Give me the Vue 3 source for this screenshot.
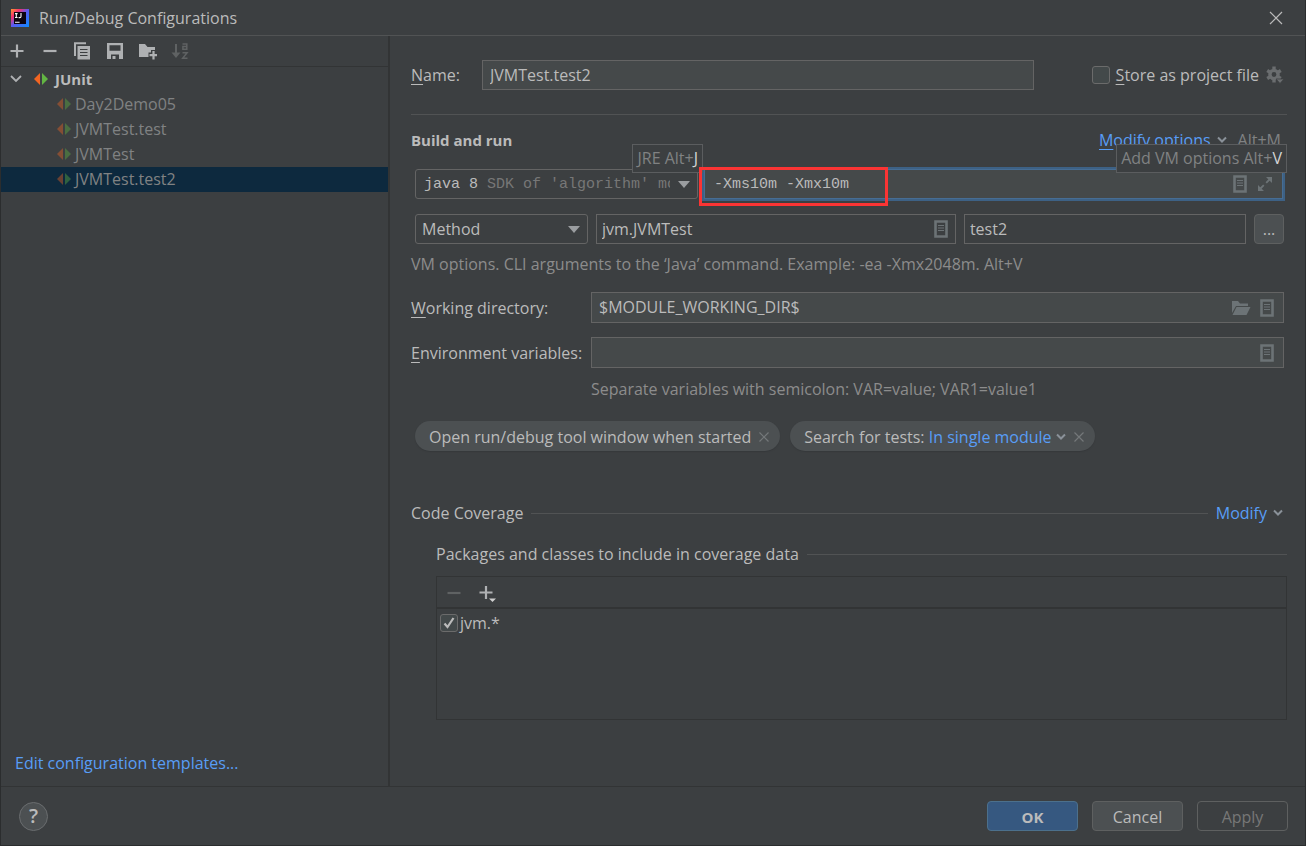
<script setup>
import { ref } from 'vue'

const configs = ['Day2Demo05', 'JVMTest.test', 'JVMTest', 'JVMTest.test2']
const selected = ref('JVMTest.test2')
const name = ref('JVMTest.test2')
const storeAsFile = ref(false)
const vmOptions = ref('-Xms10m -Xmx10m')
const testClass = ref('jvm.JVMTest')
const testMethod = ref('test2')
const workingDir = ref('$MODULE_WORKING_DIR$')
const envVars = ref('')
const jvmIncluded = ref(true)
</script>

<template>
  <svg class="symbols" aria-hidden="true">
    <symbol id="doc" viewBox="0 0 14 18">
      <path d="M1.5 1.5h11v15h-11z" fill="none" stroke="currentColor" stroke-width="2.6" />
      <path d="M4 5.5h6M4 8h6M4 10.5h6" stroke="currentColor" stroke-width="1.2" />
    </symbol>
    <symbol id="chevron" viewBox="0 0 10 8">
      <path d="M1 1.5l4 4 4-4" fill="none" stroke="currentColor" stroke-width="2" />
    </symbol>
    <symbol id="cross" viewBox="0 0 12 12">
      <path d="M1.5 1.5l9 9M10.5 1.5l-9 9" fill="none" stroke="currentColor" stroke-width="1.2" />
    </symbol>
    <symbol id="junit" viewBox="0 0 16 14">
      <path d="M7 1v12L1 7z" fill="#f26522" />
      <path d="M9 1v12l6-6z" fill="#62b543" />
    </symbol>
    <symbol id="arrow" viewBox="0 0 12 7">
      <path d="M0 0h12L6 7z" fill="#9a9da0" />
    </symbol>
  </svg>

  <div class="dialog">
    <header class="titlebar">
      <svg class="logo" viewBox="0 0 18 18" aria-hidden="true">
        <defs>
          <linearGradient id="ij" x1="0" y1="0" x2="1" y2="1">
            <stop offset="0" stop-color="#fe9a2e" />
            <stop offset=".25" stop-color="#f8306d" />
            <stop offset=".5" stop-color="#5a5bf0" />
            <stop offset="1" stop-color="#0a8bff" />
          </linearGradient>
        </defs>
        <path d="M0 0h18v18H0z" fill="url(#ij)" />
        <path d="M3 3h12v12H3z" fill="#0c0410" />
        <path d="M4 4.6h2.600M5.300 4.600v4M4 8.500h2.600M10 4v3.400c0 .8-.5 1.200-1.200 1.200H7.600M4 13.200h4.600" fill="none" stroke="#fff" stroke-width="1.1" />
      </svg>
      <h1>Run/Debug Configurations</h1>
      <button class="plain close" aria-label="Close">
        <svg viewBox="0 0 14 14" width="14" height="14"><path d="M1 1l12 12M13 1L1 13" stroke="#bbb" stroke-width="1.2" /></svg>
      </button>
    </header>

    <div class="body">
      <aside>
        <div class="toolbar">
          <button class="plain" aria-label="Add"><svg viewBox="0 0 18 18"><path d="M9 2.5v13M2.5 9h13" stroke="#afb1b3" stroke-width="2.2" /></svg></button>
          <button class="plain" aria-label="Remove"><svg viewBox="0 0 18 18"><path d="M2.5 9h13" stroke="#afb1b3" stroke-width="2.2" /></svg></button>
          <button class="plain" aria-label="Copy">
            <svg viewBox="1 0 18 18"><path d="M2 14V1.2h11" fill="none" stroke="#afb1b3" stroke-width="2" /><path d="M4.5 4H17v13.5H4.5z" fill="#afb1b3" /><path d="M7 7.5h7.5M7 10.5h7.5M7 13.5h7.5" stroke="#3c3f41" stroke-width="1.2" /></svg>
          </button>
          <button class="plain" aria-label="Save">
            <svg viewBox="1 0 18 18"><path d="M1 1h16v16H1z" fill="#afb1b3" /><path d="M3.5 3.2h11v5.6h-11zM5 12.5h8V17H5z" fill="#3c3f41" /><path d="M6.5 14h3v3h-3z" fill="#afb1b3" /></svg>
          </button>
          <button class="plain" aria-label="New folder">
            <svg viewBox="1 0 18 18"><path d="M0 2h6l2.5 3H16v10H0z" fill="#afb1b3" /><path d="M14.5 8v10M9.5 13h10" stroke="#3c3f41" stroke-width="5" /><path d="M14.5 9v8.5M10.5 13.2h7.5" stroke="#afb1b3" stroke-width="2.2" /></svg>
          </button>
          <button class="plain" aria-label="Sort" disabled>
            <svg viewBox="2 0 18 18"><path d="M5 2v10" stroke="#5f6263" stroke-width="2" /><path d="M.5 10.5h9L5 16z" fill="#5f6263" /><path d="M11.5 2h4.300v6M15.500 4.600h-3.600V7.300h3.600M11.500 10.700h4.600l-4.400 5.600h4.800" fill="none" stroke="#5f6263" stroke-width="1.5" /></svg>
          </button>
        </div>
        <ul class="tree">
          <li class="root">
            <svg class="twist" viewBox="0 0 12 8"><path d="M1 1l5 5 5-5" fill="none" stroke="#afb1b3" stroke-width="1.8" /></svg>
            <svg class="junit"><use href="#junit" /></svg>
            <b>JUnit</b>
          </li>
          <li v-for="c in configs" :key="c" class="leaf" :class="{ selected: c === selected }" @click="selected = c">
            <svg class="junit faded"><use href="#junit" /></svg>
            <span>{{ c }}</span>
          </li>
        </ul>
        <a href="#" class="templates">Edit configuration templates...</a>
      </aside>

      <main>
        <div class="row name-row">
          <label for="name"><u>N</u>ame:</label>
          <input id="name" v-model="name" class="field" type="text" />
          <input id="store" v-model="storeAsFile" class="tick" type="checkbox" />
          <label for="store" class="store"><u>S</u>tore as project file</label>
          <svg class="gear" viewBox="0 0 18 18" aria-hidden="true">
            <circle cx="8" cy="8.5" r="4.1" fill="none" stroke="#6a6d6f" stroke-width="3.4" />
            <path d="M8 .6v3M8 13.4v3M1.2 4.5l2.6 1.6M12.2 11l2.6 1.5M1.2 12.5L3.8 11M12.2 6.1l2.6-1.6" stroke="#6a6d6f" stroke-width="3.4" />
            <path d="M10 13h8l-4 4.5z" fill="#6a6d6f" stroke="#3c3f41" stroke-width=".8" />
          </svg>
        </div>
        <hr class="rule" />

        <div class="row heading">
          <h2>Build and run</h2>
          <a href="#" class="modify-options"><u>M</u>odify options</a>
          <svg class="chev"><use href="#chevron" /></svg>
          <span class="shortcut">Alt+M</span>
        </div>

        <div class="row fields java-row">
          <div class="combo jre">
            <select aria-label="JRE" class="mono"><option>java 8</option></select>
            <span class="sdk mono">SDK of 'algorithm' module</span>
            <svg class="arrow"><use href="#arrow" /></svg>
            <div class="tip">JRE Alt+<em>J</em></div>
          </div>
          <div class="box vm">
            <input v-model="vmOptions" class="mono" type="text" aria-label="VM options" />
            <svg class="doc"><use href="#doc" /></svg>
            <svg class="expand" viewBox="0 0 16 16"><path d="M9 1h6v6zM1 9v6h6z" fill="currentColor" /><path d="M13 3L9.2 6.8M3 13l3.800-3.800" stroke="currentColor" stroke-width="1.8" /></svg>
            <div class="tip">Add VM options Alt+<em>V</em></div>
            <div class="marker"></div>
          </div>
        </div>

        <div class="row fields target-row">
          <div class="combo kind">
            <select aria-label="Test kind"><option>Method</option></select>
            <svg class="arrow"><use href="#arrow" /></svg>
          </div>
          <div class="box dark class-box">
            <input v-model="testClass" type="text" aria-label="Class" />
            <svg class="doc"><use href="#doc" /></svg>
          </div>
          <div class="box dark method-box">
            <input v-model="testMethod" type="text" aria-label="Method" />
          </div>
          <button class="more" aria-label="Browse">...</button>
        </div>

        <p class="hint">VM options. CLI arguments to the ‘Java’ command. Example: -ea -Xmx2048m. Alt+V</p>

        <div class="row labelled wd">
          <label for="wd"><u>W</u>orking directory:</label>
          <div class="box">
            <input id="wd" v-model="workingDir" type="text" />
            <svg class="folder" viewBox="0 0 20 16"><path d="M1 13V1h6l2 2.500h8V6H5z" fill="currentColor" /><path d="M5.500 7H19.500l-4 8H1.500z" fill="currentColor" /></svg>
            <svg class="doc"><use href="#doc" /></svg>
          </div>
        </div>
        <div class="row labelled env">
          <label for="env"><u>E</u>nvironment variables:</label>
          <div class="box">
            <input id="env" v-model="envVars" type="text" />
            <svg class="doc"><use href="#doc" /></svg>
          </div>
        </div>
        <p class="hint env-hint">Separate variables with semicolon: VAR=value; VAR1=value1</p>

        <div class="row chips">
          <div class="chip">
            <span>Open run/debug tool window when started</span>
            <button class="plain" aria-label="Remove option"><svg class="cross"><use href="#cross" /></svg></button>
          </div>
          <div class="chip">
            <span>Search for tests: <a href="#">In single module</a></span>
            <svg class="chev"><use href="#chevron" /></svg>
            <button class="plain" aria-label="Remove option"><svg class="cross"><use href="#cross" /></svg></button>
          </div>
        </div>

        <div class="row section">
          <h3>Code Coverage</h3>
          <hr />
          <a href="#">Modify</a>
          <svg class="chev"><use href="#chevron" /></svg>
        </div>
        <div class="row section packages">
          <h3>Packages and classes to include in coverage data</h3>
          <hr />
        </div>
        <div class="coverage">
          <div class="coverage-bar">
            <button class="plain" aria-label="Remove package" disabled><svg viewBox="0 0 18 18"><path d="M2.500 9h13" stroke="#5f6263" stroke-width="2.200" /></svg></button>
            <button class="plain" aria-label="Add package"><svg viewBox="0 0 18 18"><path d="M8 2v13M1.500 8.500h13" stroke="#afb1b3" stroke-width="2.200" /><path d="M11 14.500h7l-3.500 3.500z" fill="#d0d0d0" /></svg></button>
          </div>
          <div class="coverage-item">
            <input id="jvm" v-model="jvmIncluded" class="tick" type="checkbox" />
            <label for="jvm">jvm.*</label>
          </div>
        </div>
      </main>
    </div>

    <footer>
      <button class="help" aria-label="Help">?</button>
      <button class="btn ok">OK</button>
      <button class="btn">Cancel</button>
      <button class="btn apply" disabled>Apply</button>
    </footer>
  </div>
</template>

<style>
body {
  margin: 0;
  background: #3c3f41;
}
</style>

<style scoped>
.symbols {
  position: absolute;
  width: 0;
  height: 0;
}
.dialog,
.dialog * {
  box-sizing: border-box;
}
.dialog {
  display: flex;
  flex-direction: column;
  min-height: 100vh;
  border: solid #2b2d2e;
  border-width: 0 1px 1px;
  background: #3c3f41;
  color: #bbb;
  font: 16px/24px "Open Sans", "Noto Sans", sans-serif;
}
svg {
  display: block;
  flex: none;
  overflow: visible;
}
h1, h2, h3, p, ul {
  margin: 0;
  padding: 0;
  font-size: inherit;
  font-weight: 400;
}
button, input, select {
  margin: 0;
  color: inherit;
  font: inherit;
}
a {
  color: #589df6;
  text-decoration: none;
}
u {
  text-underline-offset: 3px;
}
.plain {
  padding: 0;
  border: 0;
  background: none;
}
.row {
  display: flex;
  align-items: center;
}

.titlebar {
  display: flex;
  align-items: center;
  height: 36px;
  padding: 0 22px 0 10px;
  border-bottom: 1px solid #515354;
}
.logo {
  width: 18px;
  height: 18px;
  margin-right: 10px;
}
.close {
  margin-left: auto;
}

.body {
  display: flex;
  flex: 1;
}
aside {
  display: flex;
  flex: none;
  flex-direction: column;
  width: 389px;
  border-right: 2px solid #323435;
}
.toolbar {
  display: flex;
  align-items: center;
  gap: 15px;
  height: 31px;
  padding-left: 7px;
  border-bottom: 1px solid #323435;
}
.toolbar svg,
.coverage-bar svg {
  width: 18px;
  height: 18px;
}
.tree {
  list-style: none;
}
.tree li {
  display: flex;
  align-items: center;
  height: 25px;
  padding-bottom: 1px;
}
.tree .root {
  padding-left: 9px;
}
.root b {
  margin-left: 6px;
  font-size: 15px;
}
.twist {
  width: 12px;
  height: 8px;
  margin-right: 11px;
}
.junit {
  width: 16px;
  height: 14px;
}
.tree .leaf {
  padding-left: 55px;
  color: #808283;
}
.leaf span {
  margin-left: 3px;
}
.faded {
  opacity: .4;
}
.selected {
  background: #0d293e;
}
.templates {
  margin: auto 0 11px 14px;
}

main {
  flex: 1;
  min-width: 0;
  padding: 24px 18px 0 21px;
}
.field,
.box,
.combo {
  height: 30px;
  border: 1px solid #646464;
  background: #45494a;
}
.field {
  flex: 1;
  min-width: 0;
  padding: 0 7px 1px;
}
.name-row label[for="name"] {
  width: 71px;
}
.tick {
  width: 18px;
  height: 18px;
  border: 1px solid #6b6b6b;
  border-radius: 3px;
  background: #43494a;
  appearance: none;
}
.name-row .tick {
  margin: 0 6px 0 58px;
}
.gear {
  width: 18px;
  height: 18px;
  margin: 0 3px 0 7px;
}
.rule {
  height: 1px;
  margin: 24px 0 13px;
  border: 0;
  background: #515354;
}
h2 {
  font-size: 15px;
  font-weight: 700;
}
.modify-options {
  margin-left: auto;
}
.chev {
  width: 10px;
  height: 8px;
  margin-left: 6px;
  color: #8a9199;
}
.shortcut {
  margin: 0 6px 0 11px;
  color: #808283;
}

.fields {
  gap: 8px;
  padding: 0 3px 0 4px;
}
.java-row {
  gap: 6px;
  margin-top: 17px;
  padding-right: 4px;
}
.target-row {
  margin-top: 15px;
}
.mono {
  font-family: "Liberation Mono", "Courier New", monospace;
  font-size: 15px;
}
.combo {
  position: relative;
  border-radius: 3px;
  background: #3c3f41;
}
.combo select {
  width: 100%;
  height: 100%;
  padding: 0 6px;
  border: 0;
  background: none;
  appearance: none;
}
.arrow {
  position: absolute;
  top: 11px;
  right: 7px;
  width: 12px;
  height: 7px;
  pointer-events: none;
}
.jre {
  flex: none;
  width: 283px;
}
.combo select.mono {
  padding: 2px 8px 0;
}
.combo .sdk {
  position: absolute;
  top: 3px;
  left: 71px;
  right: 27px;
  overflow: hidden;
  color: #777;
  white-space: nowrap;
  pointer-events: none;
}
.kind {
  flex: none;
  width: 173px;
}
.box {
  position: relative;
  display: flex;
  flex: 1;
  align-items: center;
  min-width: 0;
  padding-right: 9px;
  color: #bbb;
}
.box input {
  flex: 1;
  width: 100%;
  min-width: 0;
  padding: 0 7px 1px;
  border: 0;
  outline: 0;
  background: none;
}
.dark {
  padding-right: 7px;
  background: #3c3f41;
}
.dark input {
  padding: 0 5px 1px;
}
.class-box {
  flex: 361 1 0;
}
.method-box {
  flex: 281 1 0;
}
.box svg {
  color: #6c7376;
}
.doc {
  width: 14px;
  height: 18px;
}
.vm {
  border-color: #466d94;
  box-shadow: 0 0 0 2px #3d6185;
}
.vm .mono {
  padding: 2px 9px 0;
}
.expand {
  width: 16px;
  height: 16px;
  margin-left: 10px;
}
.folder {
  width: 20px;
  height: 16px;
  margin-right: 9px;
}
.tip {
  position: absolute;
  z-index: 2;
  right: -6px;
  bottom: 25px;
  height: 29px;
  padding: 0 4px;
  border: 1px solid #5b5d5f;
  background: #3c3f41;
  color: #808283;
  line-height: 27px;
  white-space: nowrap;
}
.vm .tip {
  right: -5px;
}
.tip em {
  color: #d5d5d5;
  font-style: normal;
}
.marker {
  position: absolute;
  z-index: 3;
  top: -3px;
  left: -6px;
  width: 189px;
  height: 39px;
  border: 3px solid #fa3434;
  pointer-events: none;
}
.more {
  flex: none;
  width: 30px;
  height: 30px;
  padding: 0;
  border: 1px solid #5e6060;
  border-radius: 4px;
  background: #4c5052;
}
.hint {
  margin-top: 8px;
  color: #8c8c8c;
}
.labelled {
  padding-right: 3px;
}
.labelled label {
  width: 180px;
}
.labelled .box {
  height: 31px;
}
.wd {
  margin-top: 16px;
}
.env {
  margin-top: 14px;
}
.env-hint {
  margin: 9px 0 0 180px;
}
.chips {
  gap: 10px;
  margin: 20px 0 50px 4px;
}
.chip {
  display: flex;
  align-items: center;
  height: 30px;
  padding: 1px 10px 0 14px;
  border-radius: 15px;
  background: #4c5052;
  box-shadow: 0 1px 1px #36393b;
  white-space: nowrap;
}
.cross {
  width: 12px;
  height: 12px;
  margin-left: 7px;
  color: #74787a;
}
.chip .chev {
  margin-left: 4px;
}
.section hr {
  flex: 1;
  height: 1px;
  margin: 0 8px;
  border: 0;
  background: #515354;
}
.section .chev {
  margin-right: 4px;
}
.packages {
  margin: 17px 0 10px 25px;
}
.packages hr {
  margin-right: 0;
}
.coverage {
  height: 144px;
  margin-left: 25px;
  border: 1px solid #323435;
}
.coverage-bar {
  display: flex;
  align-items: center;
  gap: 15px;
  height: 32px;
  padding: 2px 0 0 8px;
  border-bottom: 2px solid #323435;
}
.coverage-item {
  display: flex;
  align-items: center;
  gap: 2px;
  height: 28px;
  padding-left: 3px;
}
.tick:checked {
  background: #43494a url('data:image/svg+xml,<svg xmlns="http://www.w3.org/2000/svg" viewBox="0 0 16 16"><path d="M3.500 8.500l3 3.500 6-9" fill="none" stroke="%23bbb" stroke-width="2.200"/></svg>') center / 16px no-repeat;
}

footer {
  display: flex;
  align-items: center;
  gap: 14px;
  height: 59px;
  padding: 0 17px 0 18px;
  border-top: 1px solid #323435;
}
.help {
  width: 29px;
  height: 29px;
  margin-right: auto;
  padding: 0;
  border: 1px solid #6a6d6f;
  border-radius: 50%;
  background: #4c5052;
  font-size: 20px;
  font-weight: 600;
}
.btn {
  width: 91px;
  height: 30px;
  padding: 2px 0 0;
  border: 1px solid #5e6060;
  border-radius: 4px;
  background: #4c5052;
}
.ok {
  border-color: #4c708c;
  background: #365880;
  font-size: 15px;
  font-weight: 700;
}
.apply {
  background: none;
  color: #777;
}
</style>
